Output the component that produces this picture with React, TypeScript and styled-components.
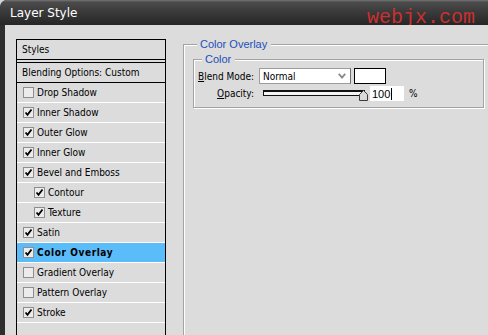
import styled, { createGlobalStyle } from 'styled-components';

const GlobalStyle = createGlobalStyle`
  html, body {
    margin: 0;
    padding: 0;
    background: #d4d4d4;
  }
  body {
    font-family: "DejaVu Sans Condensed", "Liberation Sans", sans-serif;
    color: #000;
  }
`

const Window = styled.div`
  width: 488px;
  height: 335px;
  overflow: hidden;
  display: flex;
  flex-direction: column;
  background: #2e2e2e;
  border-top-left-radius: 7px;
`

const TitleBar = styled.div`
  height: 25px;
  flex: none;
  display: flex;
  align-items: center;
  justify-content: space-between;
  padding: 0 12px 0 10px;
  background: linear-gradient(#767676 0, #4c4c4c 2px, #3b3b3b 45%, #262626 100%);
  border-top-left-radius: 7px;
`

const Title = styled.span`
  font-family: "DejaVu Sans", sans-serif;
  font-size: 12px;
  color: #fff;
  margin-top: 1px;
`

const Watermark = styled.span`
  font-family: "Liberation Mono", monospace;
  font-size: 20px;
  line-height: 20px;
  color: #c93030;
  margin-top: 11px;
  margin-right: 1px;
`

const Body = styled.div`
  flex: 1;
  min-height: 0;
  margin-left: 5px;
  background: #dcdcdc;
  display: flex;
  align-items: stretch;
  padding: 14px 0 0 11px;
  overflow: hidden;
`

const StylePanel = styled.div`
  width: 150px;
  flex: none;
  box-sizing: border-box;
  border-left: 1px solid #000;
  border-right: 1px solid #000;
  display: flex;
  flex-direction: column;
`

const PanelHeader = styled.div<{ $gap?: boolean }>`
  height: 19px;
  border-top: 1px solid #000;
  border-bottom: 1px solid #000;
  margin-top: ${({ $gap }) => ($gap ? '2px' : '0')};
  padding-left: 5px;
  display: flex;
  align-items: center;
  font-size: 10px;
`

const OptionRow = styled.div<{ $indent?: boolean; $selected?: boolean }>`
  height: 19px;
  flex: none;
  border-bottom: 1px solid #fff;
  display: flex;
  align-items: center;
  gap: 3px;
  padding-left: ${({ $indent }) => ($indent ? '17px' : '6px')};
  background: ${({ $selected }) => ($selected ? '#5abcf9' : 'transparent')};
  font-size: 10px;
  font-weight: ${({ $selected }) => ($selected ? 700 : 400)};
  letter-spacing: ${({ $selected }) => ($selected ? '0.6px' : '0')};
`

const Check = styled.span`
  width: 11px;
  height: 11px;
  box-sizing: border-box;
  flex: none;
  border: 1px solid #8e8e8e;
  background: #ececec;
  display: flex;
  align-items: center;
  justify-content: center;
`

const SettingsColumn = styled.div`
  flex: none;
  margin: 5px 0 0 17px;
`

const Frame = styled.div<{ $inner?: boolean }>`
  box-sizing: border-box;
  border: 1px solid #a3a3a3;
  box-shadow: inset 1px 1px 0 #fff, 1px 1px 0 #fff;
  width: ${({ $inner }) => ($inner ? '291px' : '330px')};
  height: ${({ $inner }) => ($inner ? 'auto' : '320px')};
  margin: ${({ $inner }) => ($inner ? '8px 0 0 9px' : '0')};
  padding-bottom: ${({ $inner }) => ($inner ? '6px' : '0')};
`

const Caption = styled.div<{ $inner?: boolean }>`
  width: fit-content;
  margin: -8px 0 0 ${({ $inner }) => ($inner ? '8px' : '13px')};
  padding: 0 4px 0 3px;
  background: #dcdcdc;
  font-family: "Liberation Sans", sans-serif;
  font-size: 11px;
  line-height: 14px;
  color: #2150b8;
`

const FieldRow = styled.div<{ $h: number }>`
  height: ${({ $h }) => $h}px;
  margin-top: 2px;
  display: flex;
  align-items: center;
  font-size: 10px;
`

const Label = styled.span`
  width: 60px;
  margin-right: 5px;
  text-align: right;
  flex: none;
`

const Select = styled.div`
  width: 92px;
  height: 16px;
  box-sizing: border-box;
  border: 1px solid #9c9c9c;
  border-right-color: #6e6e6e;
  background: #fff;
  display: flex;
  align-items: center;
  justify-content: space-between;
  padding: 0 4px 0 3px;
`

const Swatch = styled.div`
  width: 32px;
  height: 16px;
  box-sizing: border-box;
  margin-left: 3px;
  border: 1px solid #000;
  background: #fff;
`

const Slider = styled.div`
  position: relative;
  width: 105px;
  height: 15px;
  margin-left: 4px;
  padding-top: 4px;
  box-sizing: border-box;
`

const Track = styled.div`
  width: 102px;
  height: 6px;
  box-sizing: border-box;
  border: 1px solid #111;
  border-top-width: 2px;
  background: #f4f4f4;
`

const Thumb = styled.svg`
  position: absolute;
  left: 96px;
  top: 4px;
`

const NumberBox = styled.div`
  width: 34px;
  height: 15px;
  margin-left: 2px;
  background: #fff;
  display: flex;
  align-items: center;
  padding-left: 2px;
  box-sizing: border-box;
  font-family: "Liberation Sans", sans-serif;
  font-size: 11px;
`

const Caret = styled.span`
  width: 1px;
  height: 12px;
  background: #000;
  margin-left: 1px;
`

const Percent = styled.span`
  margin-left: 5px;
  font-size: 10px;
`

const options = [
  { name: 'Drop Shadow', on: false },
  { name: 'Inner Shadow', on: true },
  { name: 'Outer Glow', on: true },
  { name: 'Inner Glow', on: true },
  { name: 'Bevel and Emboss', on: true },
  { name: 'Contour', on: true, indent: true },
  { name: 'Texture', on: true, indent: true },
  { name: 'Satin', on: true },
  { name: 'Color Overlay', on: true, selected: true },
  { name: 'Gradient Overlay', on: false },
  { name: 'Pattern Overlay', on: false },
  { name: 'Stroke', on: true },
]

function CheckMark() {
  return (
    <svg width="9" height="9" viewBox="0 0 9 9">
      <polyline points="1.5,4.5 3.5,6.8 7.5,1.5" fill="none" stroke="#000" strokeWidth="1.8" />
    </svg>
  )
}

export default function App() {
  return (
    <Window>
      <GlobalStyle />
      <TitleBar>
        <Title>Layer Style</Title>
        <Watermark>webjx.com</Watermark>
      </TitleBar>
      <Body>
        <StylePanel>
          <PanelHeader>Styles</PanelHeader>
          <PanelHeader $gap>Blending Options: Custom</PanelHeader>
          {options.map((o) => (
            <OptionRow key={o.name} $indent={o.indent} $selected={o.selected}>
              <Check>{o.on && <CheckMark />}</Check>
              {o.name}
            </OptionRow>
          ))}
        </StylePanel>

        <SettingsColumn>
          <Frame>
            <Caption>Color Overlay</Caption>
            <Frame $inner>
              <Caption $inner>Color</Caption>
              <FieldRow $h={16}>
                <Label><u>B</u>lend Mode:</Label>
                <Select>
                  <span>Normal</span>
                  <svg width="8" height="6" viewBox="0 0 8 6">
                    <polyline points="0.8,0.8 4,4.6 7.2,0.8" fill="none" stroke="#8a8a8a" strokeWidth="1.8" />
                  </svg>
                </Select>
                <Swatch />
              </FieldRow>
              <FieldRow $h={15}>
                <Label><u>O</u>pacity:</Label>
                <Slider>
                  <Track />
                  <Thumb width="9" height="11" viewBox="0 0 9 11">
                    <polygon points="4.5,0.5 8.5,4.5 8.5,10.5 0.5,10.5 0.5,4.5" fill="#dadada" stroke="#3c3c3c" />
                  </Thumb>
                </Slider>
                <NumberBox>100<Caret /></NumberBox>
                <Percent>%</Percent>
              </FieldRow>
            </Frame>
          </Frame>
        </SettingsColumn>
      </Body>
    </Window>
  )
}
